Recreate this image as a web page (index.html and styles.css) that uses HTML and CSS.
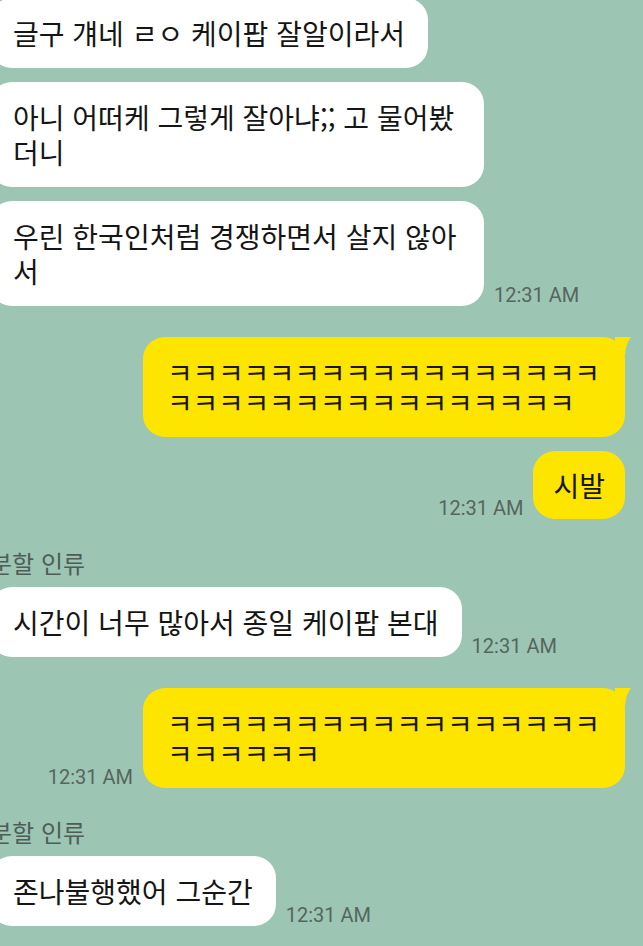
FILE: index.html
```html
<!DOCTYPE html>
<html lang="ko">
<head>
<meta charset="utf-8">
<title>채팅</title>
<link rel="stylesheet" href="styles.css">
</head>
<body>
<div class="chat">
  <div class="row in first">
    <div class="bubble white">글구 걔네 ㄹㅇ 케이팝 잘알이라서</div>
  </div>
  <div class="row in">
    <div class="bubble white">아니 어떠케 그렇게 잘아냐;; 고 물어봤더니</div>
  </div>
  <div class="row in">
    <div class="bubble white">우린 한국인처럼 경쟁하면서 살지 않아서</div>
    <span class="time">12:31 AM</span>
  </div>

  <div class="row out group">
    <div class="bubble yellow kk tail">ㅋㅋㅋㅋㅋㅋㅋㅋㅋㅋㅋㅋㅋㅋㅋㅋㅋㅋㅋㅋㅋㅋㅋㅋㅋㅋㅋㅋㅋㅋㅋㅋㅋ</div>
  </div>
  <div class="row out">
    <span class="time">12:31 AM</span>
    <div class="bubble yellow">시발</div>
  </div>

  <div class="name group">분할 인류</div>
  <div class="row in named">
    <div class="bubble white">시간이 너무 많아서 종일 케이팝 본대</div>
    <span class="time">12:31 AM</span>
  </div>

  <div class="row out group">
    <span class="time">12:31 AM</span>
    <div class="bubble yellow kk tail">ㅋㅋㅋㅋㅋㅋㅋㅋㅋㅋㅋㅋㅋㅋㅋㅋㅋㅋㅋㅋㅋㅋㅋ</div>
  </div>

  <div class="name group">분할 인류</div>
  <div class="row in named">
    <div class="bubble white">존나불행했어 그순간</div>
    <span class="time">12:31 AM</span>
  </div>
</div>
</body>
</html>
```

FILE: styles.css
```css
html, body {
  margin: 0;
  padding: 0;
  background: #9dc5b4;
  height: 100%;
  overflow: hidden;
}

.chat {
  margin: -2px 0 0 -10px;
  display: flex;
  flex-direction: column;
  font-family: "Noto Sans CJK KR", "Noto Sans", sans-serif;
}

.row {
  display: flex;
  align-items: flex-end;
  gap: 10px;
  margin-top: 14px;
}

.row.first {
  margin-top: 0;
}

.row.out {
  justify-content: flex-end;
  padding-right: 18px;
}

.row.group,
.name.group {
  margin-top: 31px;
}

.row.named {
  margin-top: 11px;
}

.bubble {
  position: relative;
  box-sizing: border-box;
  font-size: 28px;
  line-height: 35px;
  color: #151515;
  padding: 17.5px 23px;
  border-radius: 22px;
  word-break: break-all;
}

.bubble.white {
  background: #ffffff;
  max-width: 494px;
}

.bubble.yellow {
  background: #fee500;
  padding: 16.5px 20px 16.5px 20px;
  border-radius: 22px;
}

.bubble.kk {
  max-width: 482px;
  padding: 20px 22px 20px 24px;
  line-height: 30px;
  letter-spacing: -0.3px;
  color: #1a1405;
}

.bubble.tail::after {
  content: "";
  position: absolute;
  top: 0;
  right: -6px;
  width: 16px;
  height: 18px;
  background: #fee500;
  clip-path: path("M0 0 L16 0 Q11 6 10 18 L0 18 Z");
}

.time {
  flex: none;
  font-family: Roboto, "Liberation Sans", sans-serif;
  font-size: 20px;
  line-height: 20px;
  color: #56655f;
  padding-bottom: 1px;
}

.name {
  font-size: 24px;
  line-height: 26px;
  color: #4e5d57;
}
```
